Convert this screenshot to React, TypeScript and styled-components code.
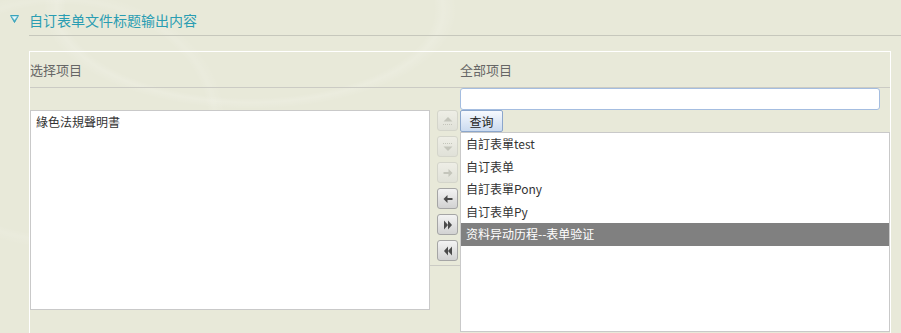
import React from 'react';
import styled, { createGlobalStyle } from 'styled-components';

const GlobalStyle = createGlobalStyle`
  html, body {
    margin: 0;
    padding: 0;
  }
  body {
    background-color: #e8e9d9;
    background-image:
      radial-gradient(ellipse 230px 110px at 250px 10px, transparent 80%, rgba(255, 255, 255, 0.14) 84%, transparent 90%),
      radial-gradient(ellipse 180px 140px at 60px 120px, transparent 82%, rgba(255, 255, 255, 0.1) 86%, transparent 92%);
    font-family: "Noto Sans CJK SC", "Noto Sans", sans-serif;
    overflow: hidden;
  }
`;

const Page = styled.div`
  width: 901px;
  height: 333px;
  overflow: hidden;
`;

const Header = styled.div`
  display: flex;
  align-items: stretch;
  height: 36px;
`;

const HeaderIcon = styled.div`
  width: 29px;
  padding: 15px 0 0 10px;
  box-sizing: border-box;

  svg {
    display: block;
  }
`;

const Title = styled.div`
  flex: 1;
  display: flex;
  align-items: center;
  padding-top: 4px;
  box-sizing: border-box;
  border-bottom: 1px solid #c6c7bc;
  font-size: 14px;
  color: #2a9db2;
`;

const Panel = styled.div`
  margin: 15px 0 0 29px;
  width: 862px;
  height: 290px;
  box-sizing: border-box;
  border: 1px solid #ffffff;
  border-bottom: none;
`;

const Columns = styled.div`
  display: grid;
  grid-template-columns: 400px 30px 430px;
`;

const HeadRow = styled(Columns)`
  height: 35px;
  border-bottom: 1px solid #cbcbc4;
`;

const HeadLabel = styled.div`
  display: flex;
  align-items: center;
  font-size: 13px;
  color: #666;
`;

const LeftCell = styled.div`
  padding-top: 22px;
`;

const MiddleCell = styled.div`
  align-self: start;
  display: flex;
  flex-direction: column;
  gap: 5px;
  padding: 22px 0 4px 7px;
  border-bottom: 1px solid #cbcbc4;
`;

const RightCell = styled.div`
  display: flex;
  flex-direction: column;
  align-items: flex-start;
`;

const SearchInput = styled.input`
  width: 420px;
  height: 22px;
  box-sizing: border-box;
  margin: 0;
  border: 1px solid #a4bde0;
  border-radius: 3px;
  background: #fff;
  outline: none;
`;

const SearchButton = styled.button`
  width: 43px;
  height: 22px;
  box-sizing: border-box;
  margin: 0;
  padding: 0;
  border: 1px solid #8ba6cc;
  border-radius: 2px;
  background: linear-gradient(#f6f9fe, #cbdbf0);
  font-family: "Noto Sans CJK SC", sans-serif;
  font-size: 12px;
  color: #222;
`;

const ListBox = styled.div<{ $width: number }>`
  width: ${(p) => p.$width}px;
  height: 200px;
  box-sizing: border-box;
  border: 1px solid #c9c9c9;
  background: #fff;
  overflow: hidden;
`;

const ListItem = styled.div<{ $selected?: boolean }>`
  height: 22.5px;
  line-height: 22.5px;
  padding: 0 5px;
  font-size: 12px;
  white-space: nowrap;
  color: ${(p) => (p.$selected ? '#fff' : '#333')};
  background: ${(p) => (p.$selected ? '#808080' : 'transparent')};
`;

const MoveButton = styled.button<{ $off?: boolean }>`
  width: 21px;
  height: 21px;
  box-sizing: border-box;
  margin: 0;
  padding: 0;
  display: flex;
  align-items: center;
  justify-content: center;
  border: 1px solid ${(p) => (p.$off ? '#d4d5cb' : '#a5a5a5')};
  border-radius: 3px;
  background: ${(p) =>
    p.$off ? 'linear-gradient(#eeeee6, #e0e1d8)' : 'linear-gradient(#f3f3f3, #d2d2d2)'};
  color: ${(p) => (p.$off ? '#c4c5bb' : '#4a4a4a')};
`;

const Tri = () => (
  <svg width="9" height="8" viewBox="0 0 9 8">
    <defs>
      <linearGradient id="tri" x1="0" y1="0" x2="0" y2="1">
        <stop offset="0" stopColor="#bfe6ee" />
        <stop offset="1" stopColor="#2f9fb8" />
      </linearGradient>
    </defs>
    <polygon points="0.5,0.5 8.5,0.5 4.5,7.5" fill="url(#tri)" stroke="#3aa3bb" strokeWidth="1" />
    <polygon points="2.5,1.8 6.5,1.8 4.5,5" fill="#e9f7fa" />
  </svg>
);

const icons: Record<string, React.ReactNode> = {
  up: (
    <>
      <polygon points="6,2 10.5,6.5 1.5,6.5" fill="currentColor" />
      <line x1="1" y1="9.5" x2="11" y2="9.5" stroke="currentColor" strokeDasharray="1 1" />
    </>
  ),
  down: (
    <>
      <line x1="1" y1="2.5" x2="11" y2="2.5" stroke="currentColor" strokeDasharray="1 1" />
      <polygon points="1.5,5.5 10.5,5.5 6,10" fill="currentColor" />
    </>
  ),
  right: <polygon points="1.5,5 6.5,5 6.5,2 10.5,6 6.5,10 6.5,7 1.5,7" fill="currentColor" />,
  left: <polygon points="10.5,5 5.5,5 5.5,2 1.5,6 5.5,10 5.5,7 10.5,7" fill="currentColor" />,
  allRight: (
    <>
      <polygon points="2,1.5 6,6 2,10.5" fill="currentColor" />
      <polygon points="6,1.5 10,6 6,10.5" fill="currentColor" />
    </>
  ),
  allLeft: (
    <>
      <polygon points="10,1.5 6,6 10,10.5" fill="currentColor" />
      <polygon points="6,1.5 2,6 6,10.5" fill="currentColor" />
    </>
  ),
};

const moves = [
  { key: 'up', off: true },
  { key: 'down', off: true },
  { key: 'right', off: true },
  { key: 'left', off: false },
  { key: 'allRight', off: false },
  { key: 'allLeft', off: false },
];

const chosen = ['綠色法規聲明書'];
const allItems = ['自訂表單test', '自订表单', '自訂表單Pony', '自订表单Py', '资料异动历程--表单验证'];

export default function App() {
  return (
    <Page>
      <GlobalStyle />
      <Header>
        <HeaderIcon>
          <Tri />
        </HeaderIcon>
        <Title>自订表单文件标题输出内容</Title>
      </Header>
      <Panel>
        <HeadRow>
          <HeadLabel>选择项目</HeadLabel>
          <div />
          <HeadLabel>全部项目</HeadLabel>
        </HeadRow>
        <Columns>
          <LeftCell>
            <ListBox $width={400}>
              {chosen.map((t) => (
                <ListItem key={t}>{t}</ListItem>
              ))}
            </ListBox>
          </LeftCell>
          <MiddleCell>
            {moves.map((m) => (
              <MoveButton key={m.key} $off={m.off}>
                <svg width="12" height="12" viewBox="0 0 12 12">
                  {icons[m.key]}
                </svg>
              </MoveButton>
            ))}
          </MiddleCell>
          <RightCell>
            <SearchInput />
            <SearchButton>查询</SearchButton>
            <ListBox $width={430}>
              {allItems.map((t, i) => (
                <ListItem key={t} $selected={i === 4}>
                  {t}
                </ListItem>
              ))}
            </ListBox>
          </RightCell>
        </Columns>
      </Panel>
    </Page>
  );
}
